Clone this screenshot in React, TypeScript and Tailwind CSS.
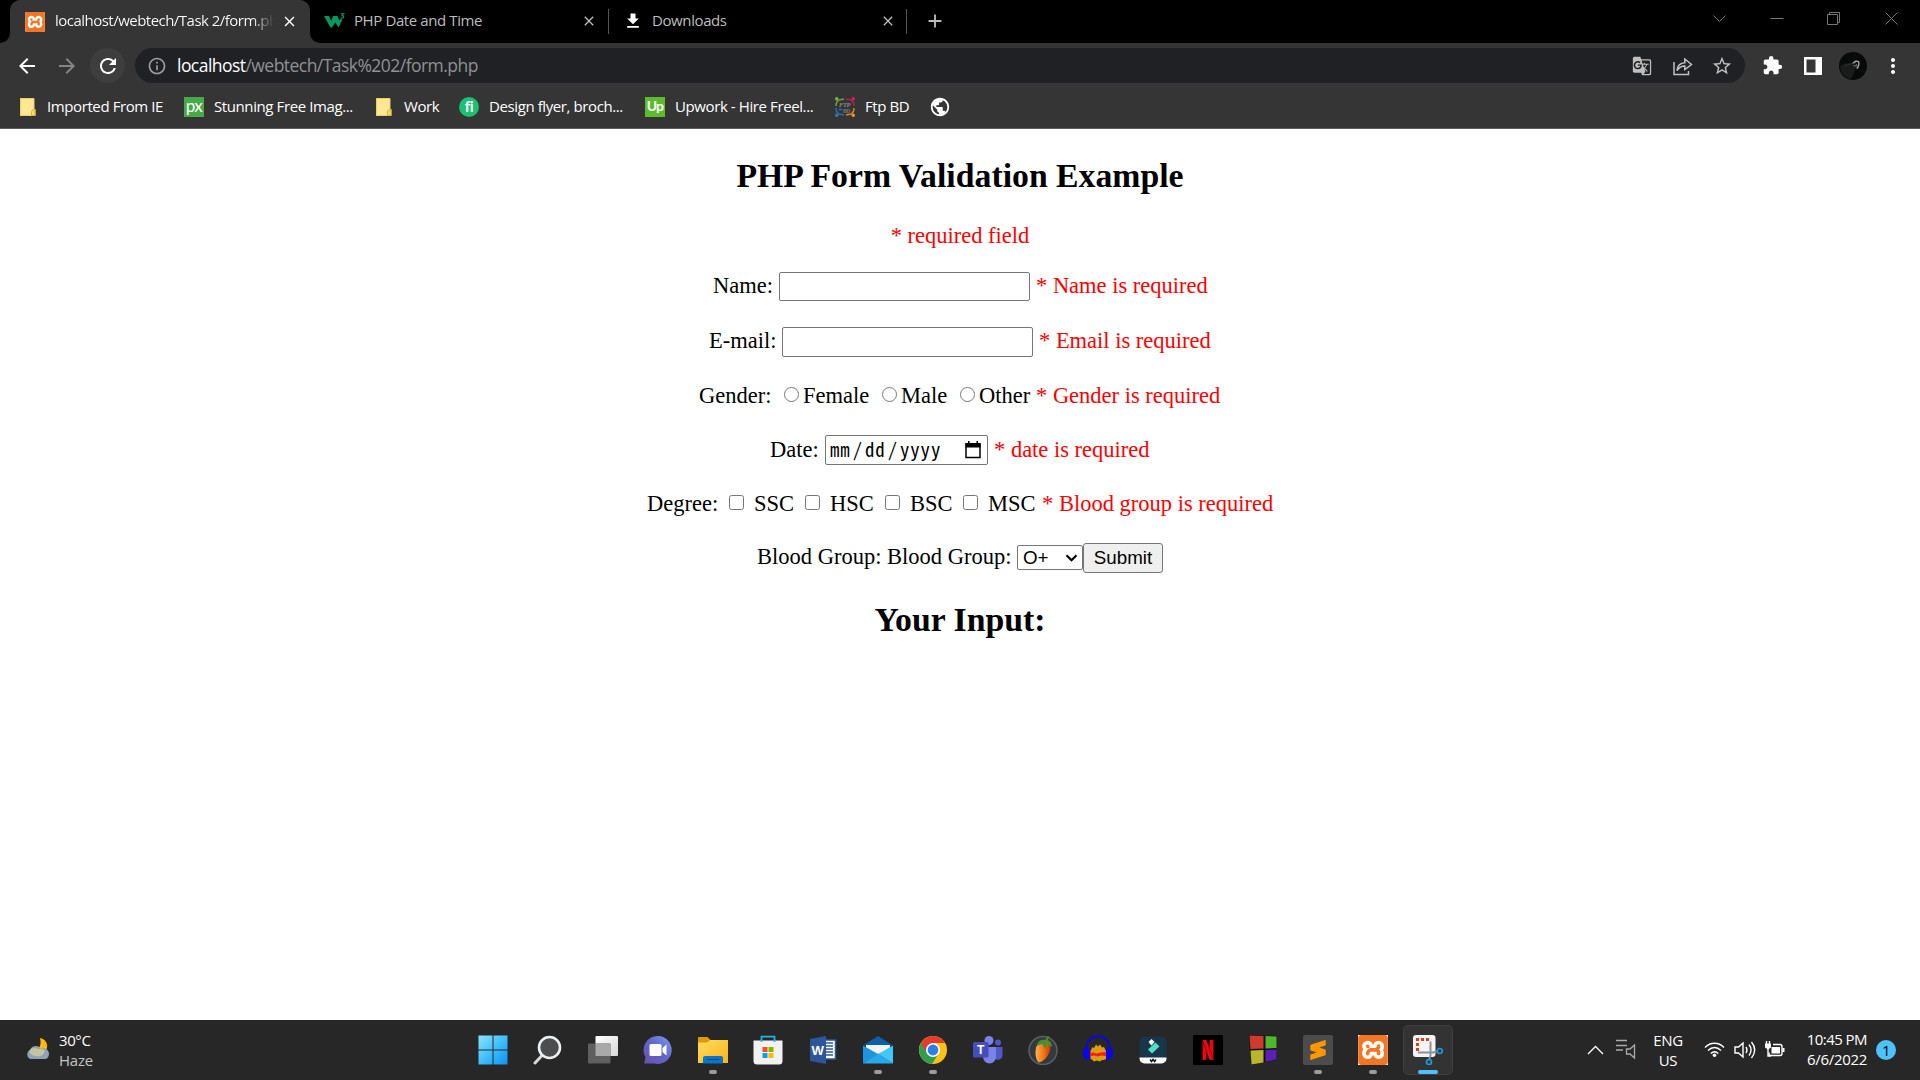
import React from "react";
import { SiXampp, SiSublimetext, SiNetflix } from "react-icons/si";
import {
  MdStarBorder,
  MdExtension,
  MdRefresh,
  MdArrowBack,
  MdArrowForward,
  MdInfoOutline,
  MdGTranslate,
  MdFileDownload,
  MdPublic,
  MdMoreVert,
  MdClose,
  MdAdd,
} from "react-icons/md";

/* ---------- browser chrome ---------- */

function XamppBadge({ size }: { size: number }) {
  return (
    <span className="flex shrink-0 items-center justify-center bg-white">
      <SiXampp size={size} className="text-[#f37623]" />
    </span>
  );
}

function TabStrip() {
  return (
    <div className="flex h-[43px] bg-black text-[15px] leading-[43px] tracking-[-0.4px] text-[#bdbdbd]">
      <div className="flex w-[10px] items-end bg-[#353535]">
        <div className="h-full w-full rounded-br-[10px] bg-black" />
      </div>
      <div className="bg-black">
        <div className="flex h-full w-[300px] items-center rounded-t-[10px] bg-[#353535] pl-[15px] text-white">
          <div className="overflow-hidden rounded-[2px]">
            <XamppBadge size={20} />
          </div>
          <div className="ml-[10px] h-[41px] w-[219px] overflow-hidden whitespace-nowrap bg-linear-to-r from-white from-90% to-transparent to-100% bg-clip-text leading-[39px] tracking-[-0.52px] text-transparent">
            localhost/webtech/Task 2/form.php
          </div>
          <MdClose size={17} className="ml-[7px] text-white" />
        </div>
      </div>
      <div className="flex w-[10px] items-end bg-[#353535]">
        <div className="h-full w-full rounded-bl-[10px] bg-black" />
      </div>
      <div className="flex h-[42px] w-[288px] items-center pl-[4px]">
        <svg width="21" height="16" viewBox="0 0 21 16">
          <path d="M0 3h5l2.200 5L9 3h4.500l1.800 4.500L17 5.500l1.200 1.500-3.700 7.500-3.200-5-3.300 5H6.500z" fill="#059862" />
          <path d="M16.500 .8h3.200l-1.700 1.800c1.200 0 1.700.6 1.700 1.300 0 1-1.500 1.600-3.100.9" fill="none" stroke="#059862" strokeWidth="1.100" />
        </svg>
        <span className="ml-[9px] flex-1 pb-[2px] leading-[39px]">PHP Date and Time</span>
        <MdClose size={16} className="mr-[11px]" />
      </div>
      <div className="mt-[9px] h-[25px] w-px bg-[#555]" />
      <div className="flex h-[42px] w-[297px] items-center pl-[14px]">
        <MdFileDownload size={20} className="text-white" />
        <span className="ml-[9px] flex-1 pb-[2px] leading-[39px]">Downloads</span>
        <MdClose size={16} className="mr-[10px]" />
      </div>
      <div className="mt-[9px] h-[25px] w-px bg-[#555]" />
      <MdAdd size={22} className="mt-[10px] ml-[17px]" />
      <svg className="mt-[8px] mr-[21px] ml-auto" width="187" height="21" viewBox="0 0 187 21" fill="none" stroke="#777" strokeWidth="1">
        <path d="M1.500 7.500l6 6 6-6M58.500 10.500h13M115.500 6.500h10v10h-10zM117.500 6v-1.500h10v10h-1.500M173.500 4.500l12 12M185.500 4.500l-12 12" />
      </svg>
    </div>
  );
}

function Toolbar() {
  return (
    <div className="flex h-[45px] items-center text-white">
      <MdArrowBack size={24} className="ml-[15px]" />
      <MdArrowForward size={24} className="ml-[16px] text-[#858585]" />
      <div className="ml-[11px] flex size-[35px] items-center justify-center rounded-full bg-[#3e3e3e]">
        <MdRefresh size={24} />
      </div>
      <div className="ml-[10px] flex h-[35px] w-[1610px] items-center rounded-full bg-[#202124] text-[#bfbfbf]">
        <MdInfoOutline size={20} className="ml-[12px] text-[#9aa0a6]" />
        <div className="ml-[10px] pb-px text-[17.5px] leading-[33px] tracking-[-0.54px] text-[#8f9195]">
          <span className="text-white">localhost</span>/webtech/Task%202/form.php
        </div>
        <MdGTranslate size={20} className="ml-auto" />
        <svg className="ml-[20px]" width="22" height="22" viewBox="0 0 22 22" fill="none" stroke="currentColor" strokeWidth="1.500">
          <path d="M2 7v12.500h14.500V16" />
          <path d="M5 15.500c.5-5 3.200-7.500 7.800-7.800V4L19.500 9.500l-6.700 5v-3.600C9 10.800 7 12.500 5 15.500z" />
        </svg>
        <MdStarBorder size={22} className="mr-[12px] ml-[17px]" />
      </div>
      <MdExtension size={21} className="ml-[17px]" />
      <svg className="ml-[21px]" width="18" height="18" viewBox="0 0 18 18">
        <path fill="#fff" d="M0 0h18v18H0z" />
        <path fill="#353535" d="M2.500 2.500h9v13h-9z" />
      </svg>
      <svg className="ml-[17px]" width="28" height="28" viewBox="0 0 28 28">
        <circle cx="14" cy="14" r="14" fill="#080909" />
        <path d="M1 15c4-6 9-2 13-5l3 6-5 11C6 26 2 21 1 15z" fill="#191c1b" />
        <path d="M6 14l8-3" stroke="#2d3130" />
        <path d="M14 11.500c1.500-2.500 4.500-3 5.500-1.500s0 5-1.800 6.500" fill="none" stroke="#aaa" strokeWidth="1.400" />
        <path d="M16.500 12l1.500 1-1.500 2M14.500 13.500h2" fill="none" stroke="#777" />
      </svg>
      <MdMoreVert size={24} className="ml-[14px]" />
    </div>
  );
}

function NoteFolder() {
  return (
    <svg width="16" height="18" viewBox="0 0 16 18">
      <path d="M0 0h14v11h1.500v7H0z" fill="#fbe18c" />
      <path d="M.5.500h13.500v10.800l-2.500 1.500v4.700H.5z" fill="#ffe794" stroke="#f0cd62" />
      <path d="M11.500 17.500v-4.300l2.500-1.700 1 .8v5.200z" fill="#f9da72" stroke="#dcae33" />
    </svg>
  );
}

function FtpIcon() {
  return (
    <svg width="20" height="20" viewBox="0 0 20 20" fill="none" strokeWidth="1.500">
      <path d="M1 9c0-3 1-5 3-6l5-1" stroke="#6aa43a" />
      <path d="M11 2l5 1c2 1 3 3 3 6" stroke="#b51f56" />
      <path d="M1 11c0 3 1 5 3 6l5 1" stroke="#2b70ad" />
      <path d="M11 18l5-1c2-1 3-3 3-6" stroke="#dc8624" />
      <circle cx="1.700" cy="1.700" r="1.700" fill="#7ab648" />
      <circle cx="18.300" cy="1.700" r="1.700" fill="#d81b60" />
      <circle cx="1.700" cy="18.300" r="1.700" fill="#2979bd" />
      <circle cx="18.300" cy="18.300" r="1.700" fill="#f7941d" />
      <text x="4" y="9.500" fill="#888" fontSize="6.500" fontWeight="bold" fontStyle="italic" fontFamily="Liberation Serif">FTP</text>
      <text x="8" y="15.500" fill="#777" fontSize="5.500" fontWeight="bold" fontFamily="Liberation Serif">BD</text>
      <path d="M4 12.500h3" stroke="#2979bd" />
    </svg>
  );
}

function Bookmark({ icon, label, box }: { icon: React.ReactNode; label: string; box: string }) {
  return (
    <div className={`flex items-center whitespace-nowrap ${box}`}>
      <div className="flex w-5 shrink-0">{icon}</div>
      <span className="pb-[2px]">{label}</span>
    </div>
  );
}

function Bookmarks() {
  return (
    <div className="flex h-[41px] items-center border-b border-[#5c5c5c] pb-[3px] pl-[20px] text-[15px] leading-5 tracking-[-0.4px] text-white">
      <Bookmark box="w-[164px] gap-[7px]" label="Imported From IE" icon={<NoteFolder />} />
      <Bookmark
        box="w-[192px] gap-[10px]"
        label="Stunning Free Imag..."
        icon={
          <span className="flex size-5 justify-center bg-[#48a947] font-['Lato'] text-[17px] leading-[17px] tracking-[-0.5px]">px</span>
        }
      />
      <Bookmark box="w-[83px] gap-[8px]" label="Work" icon={<NoteFolder />} />
      <Bookmark
        box="w-[186px] gap-[10px]"
        label="Design flyer, broch..."
        icon={
          <span className="flex size-5 justify-center rounded-full bg-[#1dbf73] font-['Lato'] text-[15px] leading-[19px] font-bold">fi</span>
        }
      />
      <Bookmark
        box="w-[190px] gap-[10px]"
        label="Upwork - Hire Freel..."
        icon={
          <span className="flex size-5 justify-center bg-[#5bbc2e] font-['Lato'] text-[14px] leading-[17px] font-bold tracking-[-0.8px]">Up</span>
        }
      />
      <Bookmark box="w-[94px] gap-[10px]" label="Ftp BD" icon={<FtpIcon />} />
      <MdPublic size={22} />
    </div>
  );
}

/* ---------- form page ---------- */

function Radio({ box }: { box: string }) {
  return <span className={`mt-[6px] size-[15px] shrink-0 rounded-full border border-[#767676] bg-white ${box}`} />;
}

function Check({ box }: { box: string }) {
  return <span className={`mt-[6px] size-[15px] shrink-0 rounded-[2.5px] border border-[#767676] bg-white ${box}`} />;
}

function FormPage() {
  const row = "flex h-[30px] items-start whitespace-nowrap";
  const field = "shrink-0 rounded-[2px] border border-[#767676] bg-white";
  return (
    <main className="h-[891px] bg-white pt-[27px] font-['Liberation_Serif',serif] text-[22.5px] leading-[29px] text-black">
      <h2 className="h-[40px] text-center text-[33.75px] leading-[40px] font-bold">PHP Form Validation Example</h2>
      <p className="mt-[25px] h-[30px] text-center text-[#ff0000]">* required field</p>
      <div className={`${row} mt-[20px] pl-[713px]`}>
        <span className="w-[66px]">Name:</span>
        <span className={`${field} mt-px h-[29px] w-[251px]`} />
        <span className="ml-[6px] text-[#ff0000]">* Name is required</span>
      </div>
      <div className={`${row} mt-[25px] pl-[709px]`}>
        <span className="w-[73px]">E-mail:</span>
        <span className={`${field} mt-px h-[30px] w-[251px]`} />
        <span className="ml-[6px] text-[#ff0000]">* Email is required</span>
      </div>
      <div className={`${row} mt-[25px] pl-[699px]`}>
        <span className="w-[85px]">Gender:</span>
        <Radio box="mr-[4px]" />
        <span className="w-[79px]">Female</span>
        <Radio box="mr-[4px]" />
        <span className="w-[59px]">Male</span>
        <Radio box="mr-[4px]" />
        <span className="w-[57px]">Other</span>
        <span className="text-[#ff0000]">* Gender is required</span>
      </div>
      <div className={`${row} mt-[24px] pl-[770px]`}>
        <span className="w-[55px]">Date:</span>
        <span className={`${field} flex h-[30px] w-[163px] justify-between pr-[6px] pl-[4px]`}>
          <span className="font-['Noto_Sans_Mono_CJK_SC','DejaVu_Sans_Mono',monospace] text-[18.750px] leading-[26px] tracking-[0.95px]">
            mm<span className="mx-[2px]">/</span>dd<span className="mx-[2px]">/</span>yyyy
          </span>
          <svg className="mt-[5px]" width="16" height="18" viewBox="0 0 16 18">
            <path d="M1 3h14v13.500H1z" fill="none" stroke="#000" strokeWidth="1.500" />
            <path d="M.5 2h15v4.500H.5zM3 0h1.500v3H3zM11.500 0H13v3h-1.500z" />
          </svg>
        </span>
        <span className="ml-[6px] text-[#ff0000]">* date is required</span>
      </div>
      <div className={`${row} mt-[24px] pl-[647px]`}>
        <span className="w-[82px]">Degree:</span>
        <Check box="mr-[10px]" />
        <span className="w-[51px]">SSC</span>
        <Check box="mr-[10px]" />
        <span className="w-[55px]">HSC</span>
        <Check box="mr-[10px]" />
        <span className="w-[53px]">BSC</span>
        <Check box="mr-[10px]" />
        <span className="w-[54px]">MSC</span>
        <span className="text-[#ff0000]">* Blood group is required</span>
      </div>
      <div className={`${row} mt-[23px] pl-[757px]`}>
        <span className="w-[260px]">Blood Group: Blood Group:</span>
        <span className={`${field} mt-[3px] flex h-[25px] w-[66px] items-center justify-between pr-[4px] pl-[5px] font-['Liberation_Sans',sans-serif] text-[18.750px] leading-[23px]`}>
          O+
          <svg width="13" height="8" viewBox="0 0 13 8" fill="none" stroke="#000" strokeWidth="2.200">
            <path d="M1.500 1.200l5 5 5-5" />
          </svg>
        </span>
        <button className="mt-px h-[30px] w-[80px] rounded-[3px] border border-[#767676] bg-[#efefef] font-['Liberation_Sans',sans-serif] text-[18.750px] leading-[28px]">
          Submit
        </button>
      </div>
      <h2 className="mt-[28px] h-[40px] text-center text-[33.75px] leading-[40px] font-bold">Your Input:</h2>
    </main>
  );
}

/* ---------- taskbar ---------- */

function WindowsLogo() {
  return (
    <svg width="30" height="30" viewBox="0 0 30 30">
      <defs>
        <linearGradient id="win" gradientUnits="userSpaceOnUse" x1="0" y1="0" x2="30" y2="30">
          <stop offset="0" stopColor="#8ce4ff" />
          <stop offset=".5" stopColor="#3fc0fb" />
          <stop offset="1" stopColor="#0a8ff5" />
        </linearGradient>
      </defs>
      <path d="M.5.500h14v14h-14zM15.500.500h14v14h-14zM.5 15.500h14v14h-14zM15.500 15.500h14v14h-14z" fill="url(#win)" />
    </svg>
  );
}

function SearchGlass() {
  return (
    <svg width="30" height="30" viewBox="0 0 30 30">
      <path d="M2 28l7-7.500" stroke="#d5d9dc" strokeWidth="3" strokeLinecap="round" />
      <circle cx="16.500" cy="12.500" r="10.500" fill="#4b4d4f" stroke="#eceff1" strokeWidth="2.600" />
    </svg>
  );
}

function TaskView() {
  return (
    <svg width="30" height="30" viewBox="0 0 30 30">
      <defs>
        <linearGradient id="tv" x1="0" y1="0" x2="1" y2="1">
          <stop offset="0" stopColor="#fff" />
          <stop offset="1" stopColor="#d8d8d8" />
        </linearGradient>
      </defs>
      <rect x="7.500" y="1" width="22.500" height="20" rx="1" fill="url(#tv)" />
      <rect x="0" y="8.500" width="22.500" height="20" rx="1" fill="#5f5f5f" />
      <path d="M7.500 8.500h15V21h-15z" fill="#a9a9a9" />
    </svg>
  );
}

function ChatIcon() {
  return (
    <svg width="30" height="30" viewBox="0 0 30 30">
      <defs>
        <linearGradient id="chat" x1="0" y1="1" x2="1" y2="0">
          <stop offset="0" stopColor="#6a4fb0" />
          <stop offset=".5" stopColor="#6264c7" />
          <stop offset="1" stopColor="#7a9cf0" />
        </linearGradient>
      </defs>
      <path d="M15 1a14 14 0 1 1-4 27.500L1.200 28.500 2.500 22A14 14 0 0 1 15 1z" fill="url(#chat)" />
      <rect x="6.500" y="9" width="12" height="12" rx="1.500" fill="#fff" />
      <path d="M19.500 13l4-3.500v11l-4-3.500z" fill="#fff" />
    </svg>
  );
}

function Explorer() {
  return (
    <svg width="30" height="30" viewBox="0 0 30 30">
      <defs>
        <linearGradient id="fold" x1="0" y1="0" x2="1" y2="1">
          <stop offset="0" stopColor="#ffdc62" />
          <stop offset="1" stopColor="#f9b517" />
        </linearGradient>
      </defs>
      <path d="M0 3a1 1 0 0 1 1-1h8.500l3 3H29a1 1 0 0 1 1 1v8H0z" fill="#dd9b00" />
      <path d="M0 7.500h9l3-2.500h18v23H0z" fill="url(#fold)" />
      <path d="M5 28.500V23a2 2 0 0 1 2-2h16a2 2 0 0 1 2 2v5.500z" fill="#0b74c9" />
      <path d="M9 24.500h12" stroke="#0a4a88" />
    </svg>
  );
}

function StoreIcon() {
  return (
    <svg width="30" height="30" viewBox="0 0 30 30">
      <path d="M.5 5.500h29V26a3.500 3.500 0 0 1-3.500 3.500H4A3.500 3.500 0 0 1 .5 26z" fill="#f1f1f1" />
      <path d="M8.500 7V1.700h13V7" fill="none" stroke="#22b4e8" strokeWidth="1.800" />
      <path d="M9.500 12h5v5h-5z" fill="#f25022" />
      <path d="M15.500 12h5v5h-5z" fill="#7fba00" />
      <path d="M9.500 18h5v5h-5z" fill="#00a4ef" />
      <path d="M15.500 18h5v5h-5z" fill="#ffb900" />
    </svg>
  );
}

function WordIcon() {
  return (
    <svg width="30" height="30" viewBox="0 0 30 30">
      <path d="M15 5h12.500v19H15z" fill="#fff" stroke="#2b579a" strokeWidth="1.500" />
      <path d="M17 8h8M17 11h8M17 14h8M17 17h8M17 20h8" stroke="#2b579a" strokeWidth="1.500" />
      <path d="M2 4l16-3v28L2 26z" fill="#2b579a" />
      <text x="3.500" y="19.500" fill="#fff" fontSize="13" fontWeight="bold" fontFamily="Liberation Sans" textLength="12" lengthAdjust="spacingAndGlyphs">W</text>
    </svg>
  );
}

function MailIcon() {
  return (
    <svg width="30" height="30" viewBox="0 0 30 30">
      <path d="M0 10.500L15 1l15 9.500z" fill="#0c5ea8" />
      <path d="M3 10h24v9H3z" fill="#f3f3f3" />
      <path d="M0 10.500l15 8.500-15 9.500z" fill="#1b95e0" />
      <path d="M30 10.500v18L15 19z" fill="#41c8f7" />
      <path d="M0 28.500h30L15 18.500z" fill="#2aa9ea" />
    </svg>
  );
}

function ChromeIcon() {
  return (
    <svg width="30" height="30" viewBox="0 0 30 30">
      <circle cx="15" cy="15" r="14" fill="#fbc116" />
      <path d="M15 15L3 8A14 14 0 0 0 14 29l7-11z" fill="#2f9e4f" />
      <path d="M3 8a14 14 0 0 1 24.200 0H15l-6 10z" fill="#e33b2e" />
      <circle cx="15" cy="15" r="7" fill="#fff" />
      <circle cx="15" cy="15" r="5.400" fill="#2f7de9" />
    </svg>
  );
}

function TeamsIcon() {
  return (
    <svg width="30" height="30" viewBox="0 0 30 30">
      <circle cx="25" cy="7.500" r="3" fill="#5059c9" />
      <path d="M20 12h9.500v8a5 5 0 0 1-9.500 2z" fill="#5059c9" />
      <circle cx="16" cy="5.500" r="4.500" fill="#7b83eb" />
      <path d="M10 12h13v10a6.500 6.500 0 0 1-13 0z" fill="#7b83eb" />
      <rect x="0" y="7" width="15.500" height="15.500" rx="1.500" fill="#464eb8" />
      <text x="4" y="19" fill="#fff" fontSize="12" fontWeight="bold" fontFamily="Liberation Sans">T</text>
    </svg>
  );
}

function FruityIcon() {
  return (
    <svg width="30" height="30" viewBox="0 0 30 30">
      <defs>
        <linearGradient id="fl" x1="0" y1="0" x2="1" y2="0">
          <stop offset="0" stopColor="#ffb04a" />
          <stop offset=".5" stopColor="#f57a1c" />
          <stop offset="1" stopColor="#c93c06" />
        </linearGradient>
      </defs>
      <circle cx="15" cy="15.500" r="14" fill="#33393d" stroke="#596167" strokeWidth="1.500" />
      <path d="M8 13c1-5 7-7 11-5 5 3 3.500 8 1 12-2 4-6 7-9.500 7.500C7.500 24 7 18 8 13z" fill="url(#fl)" />
      <path d="M9 9c2-4 5-5 8-4l3-4 1.500 1L19.500 5c3 1 5 4 4 7l-5-3-1 5-3.500-5-5 2z" fill="#4f8d2b" />
    </svg>
  );
}

function AudacityIcon() {
  return (
    <svg width="30" height="30" viewBox="0 0 30 30">
      <path d="M7.500 24V16l2-4 1.500 1 2-3.500 2 2 2-2 2 3 2-.5 2 4v8l-2 1-2 0-2 1.500-3-1-3 1-2-2z" fill="#dd9c18" />
      <path d="M7.500 18.500l3-.5 3 1 4-1 5-.5v3l-4-.5-4 1-3-1-4 .5z" fill="#f5200f" stroke="#f5200f" />
      <path d="M3.500 16C1-3.500 29-3.500 26.500 16" fill="none" stroke="#0a0ad8" strokeWidth="2.200" />
      <ellipse cx="3.500" cy="18.500" rx="3.500" ry="6" fill="#0707e8" />
      <ellipse cx="26.500" cy="18.500" rx="3.500" ry="6" fill="#0707e8" />
      <path d="M6 14v11M24 14v11" stroke="#0707e8" strokeWidth="2" />
    </svg>
  );
}

function FilmoraIcon() {
  return (
    <svg width="30" height="30" viewBox="0 0 30 30">
      <rect x="1.500" y="1.500" width="27" height="27" rx="5" fill="#183549" />
      <path d="M1.500 22.500h27v1a5 5 0 0 1-5 5h-17a5 5 0 0 1-5-5z" fill="#fff" />
      <path d="M10 14.500l7.500-7 4 4-7.500 7z" fill="#4fdfc4" />
      <path d="M10.500 7l3-3 3 3-3 3.500z" fill="#fff" />
      <path d="M12 24.500l1.500 2 1.500-2 1.500 2 1.500-2" fill="none" stroke="#111" strokeWidth="1.500" />
    </svg>
  );
}

function NetflixIcon() {
  return (
    <div className="flex size-[30px] items-center justify-center bg-black text-[#e50914]">
      <SiNetflix size={20} />
    </div>
  );
}

function BlocksIcon() {
  return (
    <svg width="30" height="30" viewBox="0 0 30 30">
      <path d="M1 0l27.500 1v24L3 30z" fill="#111" />
      <path d="M1.500.500l14 .5v12.500l-13 .5z" fill="#cf3a30" />
      <path d="M17.500 1l11 .5v11.500l-11 .5z" fill="#4db82a" />
      <path d="M2.500 15.500l13-.5v12.500l-12 2z" fill="#b9b52d" />
      <path d="M17.500 15l11-.5v10L17.500 27z" fill="#5a1fb8" />
    </svg>
  );
}

function SublimeIcon() {
  return (
    <div className="flex size-[30px] items-center justify-center rounded-[2px] bg-[#4c4c4c] text-[#ff9800]">
      <SiSublimetext size={20} />
    </div>
  );
}

function SnipIcon() {
  return (
    <svg width="30" height="30" viewBox="0 0 30 30">
      <rect x="0" y="0" width="22.500" height="22" rx="3" fill="#f4f4f4" />
      <path d="M3 3h3v3H3zM8 3h3v3H8zM13 3h3v3h-3zM3 8h3v3H3zM3 13h3v3H3z" fill="#d4421c" />
      <path d="M17.500 6.500v14l-1.500 4M5 17.500h15l4-1" fill="none" stroke="#8b9297" strokeWidth="2" />
      <circle cx="26.800" cy="16" r="2.500" fill="none" stroke="#1a9be6" strokeWidth="1.700" />
      <circle cx="16" cy="27" r="2.500" fill="none" stroke="#1a9be6" strokeWidth="1.700" />
    </svg>
  );
}

const apps: { icon: React.ReactNode; state?: "open" | "active" }[] = [
  { icon: <WindowsLogo /> },
  { icon: <SearchGlass /> },
  { icon: <TaskView /> },
  { icon: <ChatIcon /> },
  { icon: <Explorer />, state: "open" },
  { icon: <StoreIcon /> },
  { icon: <WordIcon /> },
  { icon: <MailIcon />, state: "open" },
  { icon: <ChromeIcon />, state: "open" },
  { icon: <TeamsIcon /> },
  { icon: <FruityIcon /> },
  { icon: <AudacityIcon /> },
  { icon: <FilmoraIcon /> },
  { icon: <NetflixIcon /> },
  { icon: <BlocksIcon /> },
  { icon: <SublimeIcon />, state: "open" },
  { icon: <XamppBadge size={30} />, state: "open" },
  { icon: <SnipIcon />, state: "active" },
];

function Taskbar() {
  return (
    <footer className="flex h-[60px] bg-[#272727] text-[15px] leading-[20px] tracking-[-0.4px] text-white">
      <div className="flex w-[465px] pt-[10px] pl-[25px]">
        <svg className="mt-[7px]" width="25" height="24" viewBox="0 0 25 24">
          <path d="M15 1c5 1 8 5 7 10-1 3-3 5-6 6-4 1-8 0-10-3 8 1 11-6 9-13z" fill="#fcb90d" />
          <path d="M5 22a5 5 0 0 1 0-9c2-5 9-5 11-1 4-2 8 1 8 5 0 3-2 5-4 5z" fill="#8fa3b8" />
          <path d="M4 14c2-3 6-4 9-2 3 0 6 0 7 2-2 5-6 6-9 5-3 0-6-2-7-5z" fill="#c6c3a0" />
        </svg>
        <div className="ml-[9px]">
          <div>30°C</div>
          <div className="tracking-[-0.2px] text-[#c4c4c4]">Haze</div>
        </div>
      </div>
      <div className="flex">
        {apps.map((a, i) => (
          <div key={i} className="flex w-[55px] justify-center pt-[5px]">
            <div
              className={
                a.state === "active"
                  ? "flex h-[50px] w-[50px] flex-col items-center rounded-[5px] border border-[#3f3f3f] bg-[#333333] pt-[9px]"
                  : "flex h-[50px] w-[50px] flex-col items-center pt-[10px]"
              }
            >
              <div className="flex size-[30px] items-center justify-center">{a.icon}</div>
              {a.state === "open" && <div className="mt-[5px] h-[4px] w-[8px] rounded-full bg-[#9c9c9c]" />}
              {a.state === "active" && <div className="mt-[5px] h-[4px] w-[20px] rounded-full bg-[#4cc2ff]" />}
            </div>
          </div>
        ))}
      </div>
      <div className="ml-auto flex pr-[24px]">
        <svg className="mt-[19px]" width="50" height="22" viewBox="0 0 50 22" fill="none" stroke="#fff" strokeWidth="1.300">
          <path d="M1 15l7.500-7.500L16 15" />
          <path d="M29 1.500h11M29 6.500h11M29 11h7" stroke="#aaa" />
          <path d="M39.500 10h3.500L47.500 6v13l-4.500-4h-3.500z" stroke="#aaa" />
        </svg>
        <div className="ml-[14px] w-[34px] pt-[10px] text-center">
          ENG
          <br />
          US
        </div>
        <svg className="mt-[20px] ml-[19px]" width="82" height="20" viewBox="0 0 82 20" fill="none" stroke="#fff" strokeWidth="1.400">
          <path d="M1 7.500c5.500-5.700 13.500-5.700 19 0M4 10.500c4-4 9-4 13 0M6.800 13.500c2.500-2.300 5-2.300 7.500 0" />
          <circle cx="10.500" cy="15.200" r="1.800" fill="#fff" stroke="none" />
          <path d="M31 7h3.500l4.500-4v14l-4.500-4H31z" />
          <path d="M42 7c1.300 2 1.300 4 0 6M45 4.500c2.600 3.500 2.600 7.500 0 11M47.500 2c4 5 4 11 0 16" />
          <path d="M69 4.500h7a2 2 0 0 1 2 2v7a2 2 0 0 1-2 2H67a2 2 0 0 1-2-2v-1" />
          <path d="M67.500 7h8.500v6.500h-8.500z" fill="#fff" stroke="none" />
          <path d="M79.500 8v4" strokeWidth="2" />
          <path d="M61 3.500h6v4l-3 2-3-2z" fill="#fff" stroke="none" />
          <path d="M62.500 1v3M65.500 1v3M64 8v8h3" />
        </svg>
        <div className="ml-[5px] w-[76px] pt-[9px] text-right tracking-[-0.3px] whitespace-nowrap">
          <div className="tracking-[-0.55px]">10:45 PM</div>
          <div>6/6/2022</div>
        </div>
        <div className="mt-[20px] ml-[9px] size-[20px] rounded-full bg-[#4cc2ff] text-center leading-[20px] text-black">1</div>
      </div>
    </footer>
  );
}

export default function App() {
  return (
    <div className="flex h-[1080px] w-[1920px] flex-col overflow-hidden bg-white font-['Open_Sans',sans-serif]">
      <header className="h-[129px] bg-[#353535]">
        <TabStrip />
        <Toolbar />
        <Bookmarks />
      </header>
      <FormPage />
      <Taskbar />
    </div>
  );
}
